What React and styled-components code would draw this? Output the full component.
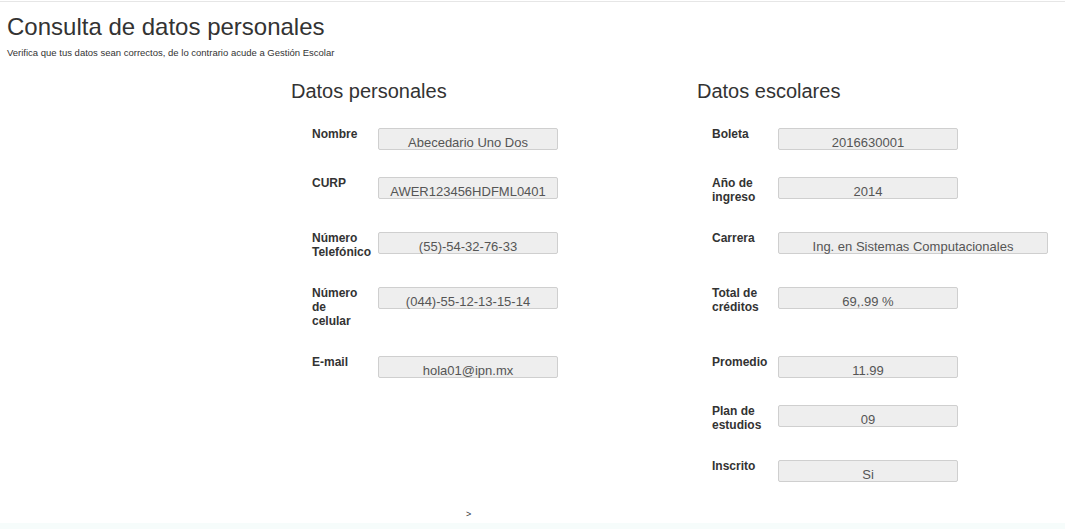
import React from 'react';
import styled, { createGlobalStyle } from 'styled-components';

const GlobalStyle = createGlobalStyle`
  body {
    margin: 0;
    background: #fff;
    font-family: "Liberation Sans", Arial, Helvetica, sans-serif;
    color: #333;
  }
`;

// labels break where the original form breaks them
const ROWS = [
  [
    { label: 'Nombre', value: 'Abecedario Uno Dos' },
    { label: 'Boleta', value: '2016630001' },
  ],
  [
    { label: 'CURP', value: 'AWER123456HDFML0401' },
    { label: 'Año de\ningreso', value: '2014' },
  ],
  [
    { label: 'Número\nTelefónico', value: '(55)-54-32-76-33' },
    { label: 'Carrera', value: 'Ing. en Sistemas Computacionales', wide: true },
  ],
  [
    { label: 'Número\nde\ncelular', value: '(044)-55-12-13-15-14' },
    { label: 'Total de\ncréditos', value: '69,.99 %' },
  ],
  [
    { label: 'E-mail', value: 'hola01@ipn.mx' },
    { label: 'Promedio', value: '11.99' },
  ],
  [null, { label: 'Plan de\nestudios', value: '09' }],
  [null, { label: 'Inscrito', value: 'Si' }],
];

function Field({ field, side }) {
  if (!field) return null;
  return (
    <>
      <Label $side={side}>{field.label}</Label>
      <Value $side={side} $wide={field.wide}>
        {field.value}
      </Value>
    </>
  );
}

function App() {
  return (
    <Page>
      <GlobalStyle />
      <TopRule />
      <Header>
        <Title>Consulta de datos personales</Title>
        <Subtitle>
          Verifica que tus datos sean correctos, de lo contrario acude a Gestión Escolar
        </Subtitle>
      </Header>
      <Sheet>
        <SectionTitle $side="left">Datos personales</SectionTitle>
        <SectionTitle $side="right">Datos escolares</SectionTitle>
        {ROWS.map(([left, right], idx) => (
          <React.Fragment key={idx}>
            <Field field={left} side="left" />
            <Field field={right} side="right" />
          </React.Fragment>
        ))}
      </Sheet>
      <Next>&gt;</Next>
      <Band />
    </Page>
  );
}

const Page = styled.div`
  width: 1065px;
  overflow: hidden;
`;

const TopRule = styled.div`
  height: 1px;
  margin-top: 1px;
  background: #e6e6e6;
`;

const Header = styled.header`
  padding: 12px 0 0 7px;
`;

const Title = styled.h1`
  margin: 0;
  font-size: 24px;
  font-weight: 400;
  line-height: 26px;
  color: #333;
`;

const Subtitle = styled.p`
  margin: 7px 0 0;
  font-size: 9.5px;
  line-height: 11px;
  color: #333;
`;

const Sheet = styled.div`
  display: grid;
  grid-template-columns: 21px 66px 319px 15px 66px 1fr;
  row-gap: 27px;
  align-items: start;
  margin: 22px 0 0 291px;
`;

const SectionTitle = styled.h2`
  grid-column: ${props => (props.$side === 'left' ? '1 / 4' : '4 / 7')};
  margin: 0 0 -1px;
  font-size: 20px;
  font-weight: 400;
  line-height: 22px;
  color: #333;
`;

const Label = styled.div`
  grid-column: ${props => (props.$side === 'left' ? 2 : 5)};
  margin-top: -1px;
  padding-bottom: 1px;
  white-space: pre-line;
  font-size: 12px;
  font-weight: 700;
  line-height: 14px;
  color: #333;
`;

const Value = styled.div`
  grid-column: ${props => (props.$side === 'left' ? 3 : 6)};
  box-sizing: border-box;
  width: ${props => (props.$wide ? '270px' : '180px')};
  height: 22px;
  padding-top: 6px;
  border: 1px solid #cfcfcf;
  border-radius: 2px;
  background: #eee;
  font-size: 13px;
  line-height: 15px;
  text-align: center;
  white-space: nowrap;
  color: #555;
`;

const Next = styled.div`
  margin-top: 27px;
  padding-left: 466px;
  font-size: 9px;
  line-height: 11px;
  color: #333;
`;

const Band = styled.div`
  height: 12px;
  margin-top: 3px;
  background: #f6fcfb;
`;

export default App;
